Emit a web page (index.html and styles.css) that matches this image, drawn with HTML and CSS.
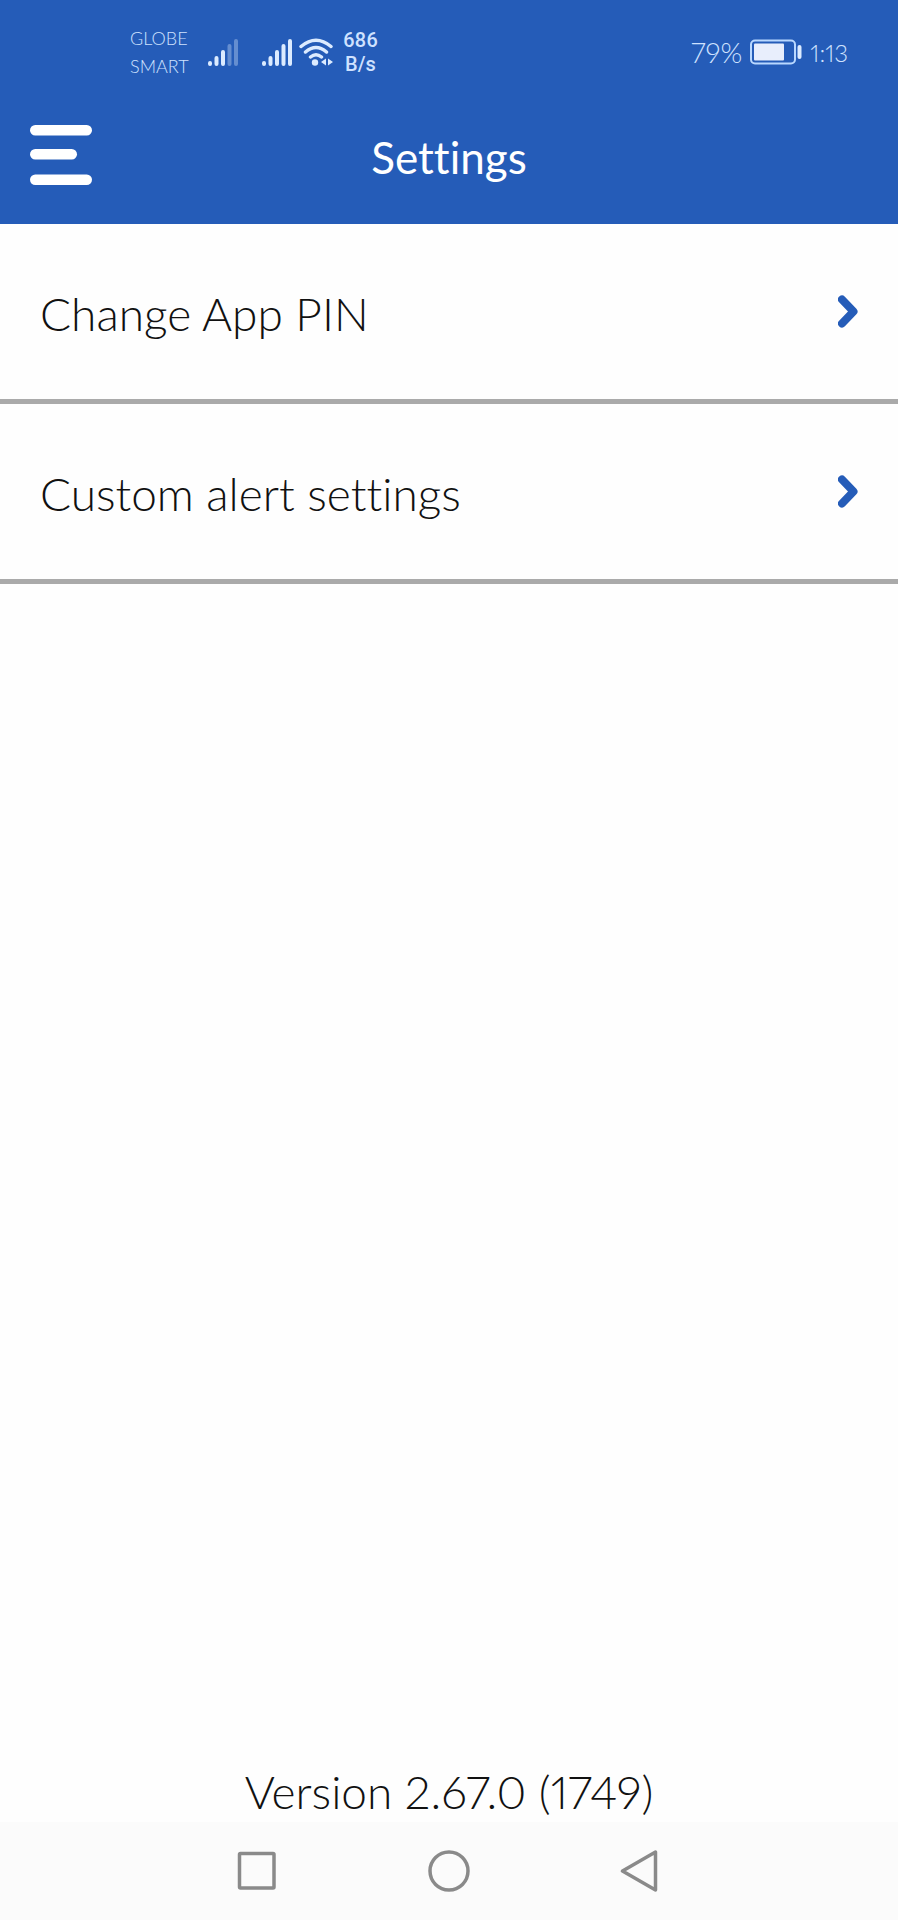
FILE: index.html
```html
<!DOCTYPE html>
<html lang="en">
<head>
  <meta charset="UTF-8" />
  <meta name="viewport" content="width=device-width, initial-scale=1.0"/>
  <title>Settings</title>
  <link rel="stylesheet" href="styles.css">
</head>
<body>
  <header class="header">
    <div class="status-bar">
      <div class="carriers">
        <div>GLOBE</div>
        <div>SMART</div>
      </div>
      <svg class="signal" width="30" height="28" viewBox="0 0 30 28" stroke="#dcebff" stroke-width="4" stroke-linecap="round" aria-hidden="true">
        <path d="M2 25v1M8.500 20v6M15 14v12" />
        <path d="M21.500 8v18M28 3v23" opacity="0.35" />
      </svg>
      <svg class="signal signal-full" width="30" height="28" viewBox="0 0 30 28" stroke="#dcebff" stroke-width="4" stroke-linecap="round" aria-hidden="true">
        <path d="M2 25v1M8.500 20v6M15 14v12M21.500 8v18M28 3v23" />
      </svg>
      <svg class="wifi" width="34" height="28" viewBox="0 0 34 28" fill="none" stroke="#dcebff" stroke-width="3.500" stroke-linecap="round" aria-hidden="true">
        <path d="M2 8.500Q17 -4 32 8.500M6.500 14Q17 5 27.500 14M11.500 19Q17 14.500 22.500 19" />
        <circle cx="16" cy="24.500" r="3.200" fill="#dcebff" stroke="none" />
        <path d="M27 20.500v7l-5-3.500zM29 20.500v7l5-3.500z" fill="#dcebff" stroke="none" />
      </svg>
      <div class="speed">
        <div>686</div>
        <div>B/s</div>
      </div>
      <div class="status-right">
        <span>79%</span>
        <svg width="52" height="26" viewBox="0 0 52 26" aria-hidden="true">
          <rect x="1" y="1.500" width="44" height="23" rx="4" fill="none" stroke="#b9d8ff" stroke-width="2" />
          <rect x="4" y="4.500" width="30" height="17" rx="1" fill="#e8eefc" />
          <rect x="47.500" y="6" width="4" height="14" rx="2" fill="#dcebff" />
        </svg>
        <span class="time">1:13</span>
      </div>
    </div>
    <div class="app-bar">
      <button class="menu-button" type="button" aria-label="Menu">
        <svg width="62" height="60" viewBox="0 0 62 60" fill="#fff" aria-hidden="true">
          <rect width="62" height="10.500" rx="5.250" />
          <rect y="24" width="47" height="10.500" rx="5.250" />
          <rect y="49.500" width="62" height="10.500" rx="5.250" />
        </svg>
      </button>
      <h1 class="title">Settings</h1>
    </div>
  </header>

  <main class="settings">
    <button class="row" type="button">
      <span class="row-label">Change App PIN</span>
      <svg width="20" height="33" viewBox="0 0 20 33" fill="none" stroke="#255cb8" stroke-width="8" stroke-linecap="round" stroke-linejoin="round" aria-hidden="true">
        <path d="M4 4.500L15.500 16.500L4 28.500" />
      </svg>
    </button>
    <button class="row" type="button">
      <span class="row-label">Custom alert settings</span>
      <svg width="20" height="33" viewBox="0 0 20 33" fill="none" stroke="#255cb8" stroke-width="8" stroke-linecap="round" stroke-linejoin="round" aria-hidden="true">
        <path d="M4 4.500L15.500 16.500L4 28.500" />
      </svg>
    </button>
    <p class="version">Version 2.67.0 (1749)</p>
  </main>

  <nav class="nav-bar">
    <button type="button" aria-label="Recent apps">
      <svg width="42" height="42" viewBox="0 0 42 42" fill="none" stroke="#8a8a8a" stroke-width="3.500" stroke-linejoin="round" aria-hidden="true">
        <rect x="3.500" y="3.500" width="34.500" height="34.500" rx="1" />
      </svg>
    </button>
    <button type="button" aria-label="Home">
      <svg width="42" height="42" viewBox="0 0 42 42" fill="none" stroke="#8a8a8a" stroke-width="3.500" aria-hidden="true">
        <circle cx="21" cy="21" r="19" />
      </svg>
    </button>
    <button type="button" aria-label="Back">
      <svg width="42" height="42" viewBox="0 0 42 42" fill="none" stroke="#8a8a8a" stroke-width="3.500" stroke-linejoin="round" aria-hidden="true">
        <path d="M35.500 2v38L2.500 21z" />
      </svg>
    </button>
  </nav>
</body>
</html>
```
FILE: styles.css
```css
* {
  box-sizing: border-box;
}

body {
  display: flex;
  flex-direction: column;
  min-height: 100vh;
  margin: 0;
  background: #fefefe;
  color: #111;
  font-family: Lato, "Liberation Sans", sans-serif;
  font-weight: 300;
  font-variant-ligatures: none;
  font-variant-numeric: proportional-nums;
}

button {
  padding: 0;
  border: 0;
  background: none;
  color: inherit;
  font: inherit;
  font-variant-ligatures: none;
  cursor: pointer;
}

svg {
  display: block;
  flex-shrink: 0;
}

.header {
  background: #255cb8;
  color: #fff;
}

.status-bar {
  display: flex;
  align-items: center;
  height: 92px;
  padding: 12px 50px 0 130px;
  color: #cfe2ff;
}

.carriers {
  width: 78px;
  font-size: 18px;
  line-height: 28px;
}

.signal-full {
  margin-left: 24px;
}

.wifi {
  margin: 0 10px 0 7px;
}

.speed {
  font-family: Roboto, sans-serif;
  font-size: 20px;
  font-weight: 500;
  line-height: 24px;
  text-align: center;
}

.status-right {
  display: flex;
  align-items: center;
  gap: 8px;
  margin-left: auto;
  font-size: 28px;
}

.time {
  font-size: 24px;
}

.app-bar {
  display: grid;
  grid-template-columns: 1fr auto 1fr;
  align-items: center;
  height: 132px;
  padding: 0 30px 6px;
}

.menu-button {
  justify-self: start;
}

.title {
  margin: 0;
  padding-top: 4px;
  font-size: 44px;
  font-weight: 400;
  line-height: 60px;
}

.settings {
  display: flex;
  flex: 1;
  flex-direction: column;
}

.row {
  display: flex;
  align-items: center;
  justify-content: space-between;
  height: 180px;
  padding: 0 40px;
  border-bottom: 5px solid #aaa;
  font-size: 46px;
  line-height: 60px;
  text-align: left;
}

.row-label {
  padding-top: 4px;
}

.version {
  margin: auto 0 0;
  font-size: 46px;
  line-height: 60px;
  text-align: center;
}

.nav-bar {
  display: flex;
  align-items: center;
  justify-content: center;
  gap: 150px;
  height: 98px;
  background: #fbfbfb;
}
```
